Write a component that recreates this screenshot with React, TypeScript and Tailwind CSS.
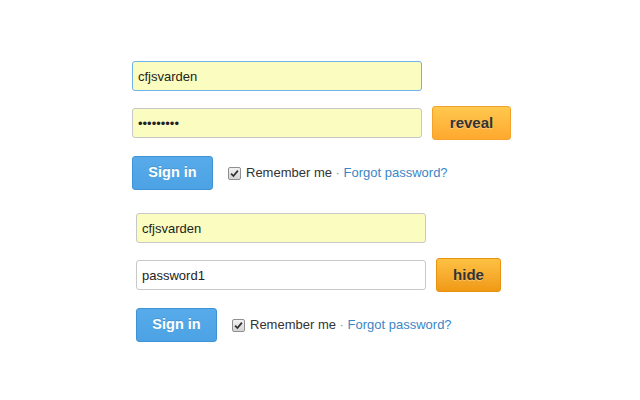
import { useState } from 'react';

function Checkbox() {
  return (
    <span className="flex size-[13px] flex-shrink-0 items-center justify-center rounded-[2px] border border-[#8f8f8f] bg-gradient-to-b from-[#f2f2f2] to-[#d4d4d4]">
      <svg viewBox="0 0 10 10" className="size-[9px]" aria-hidden>
        <path d="M1.2 5.2 L3.8 7.8 L8.8 1.8" fill="none" stroke="#333" strokeWidth="2" />
      </svg>
    </span>
  );
}

function LoginForm({ revealed, className }: { revealed: boolean; className: string }) {
  const [user, setUser] = useState('cfjsvarden');
  const [pass, setPass] = useState('password1');

  return (
    <form className={className} onSubmit={(e) => e.preventDefault()}>
      <input
        value={user}
        onChange={(e) => setUser(e.target.value)}
        className={[
          'block h-[30px] w-[290px] rounded-[3px] border bg-[#fafdbf] px-[5px] text-[13px] text-[#222] outline-none',
          revealed ? 'border-[#c8c8c8]' : 'border-[#6fb4e9]',
        ].join(' ')}
      />
      <div className="mt-[15px] flex h-[34px] items-center gap-[10px]">
        <input
          type={revealed ? 'text' : 'password'}
          value={pass}
          onChange={(e) => setPass(e.target.value)}
          className={[
            'block h-[30px] w-[290px] rounded-[3px] border border-[#c8c8c8] px-[5px] text-[13px] text-[#222] outline-none',
            revealed ? 'bg-white' : 'bg-[#fafdbf]',
          ].join(' ')}
        />
        <button
          type="button"
          className={[
            'h-[34px] rounded-[3px] border text-[15px] font-bold text-[#333] [text-shadow:0_1px_0_rgba(255,255,255,0.35)]',
            revealed
              ? 'w-[65px] border-[#e8920f] bg-gradient-to-b from-[#fdc142] to-[#f09914]'
              : 'w-[79px] border-[#f4a22a] bg-gradient-to-b from-[#ffc84e] to-[#ffa82e]',
          ].join(' ')}
        >
          {revealed ? 'hide' : 'reveal'}
        </button>
      </div>
      <div className="mt-[16px] flex h-[34px] items-center">
        <button
          type="submit"
          className="h-[34px] w-[81px] rounded-[3px] border border-[#3e92d6] bg-gradient-to-b from-[#58abea] to-[#4ca2e4] text-[14.5px] font-bold text-white [text-shadow:0_-1px_0_rgba(0,0,0,0.15)]"
        >
          Sign in
        </button>
        <label className="ml-[15px] flex items-center gap-[5px] text-[13px] text-[#333]">
          <Checkbox />
          <span>
            Remember me <span className="text-[#999]">·</span>{' '}
            <a href="#" className="text-[#3b86c6]">
              Forgot password?
            </a>
          </span>
        </label>
      </div>
    </form>
  );
}

export default function App() {
  return (
    <div className="h-[400px] w-[640px] bg-white pt-[61px] font-['Liberation_Sans',Arial,sans-serif]">
      <LoginForm revealed={false} className="ml-[132px]" />
      <LoginForm revealed className="ml-[136px] mt-[23px]" />
    </div>
  );
}
